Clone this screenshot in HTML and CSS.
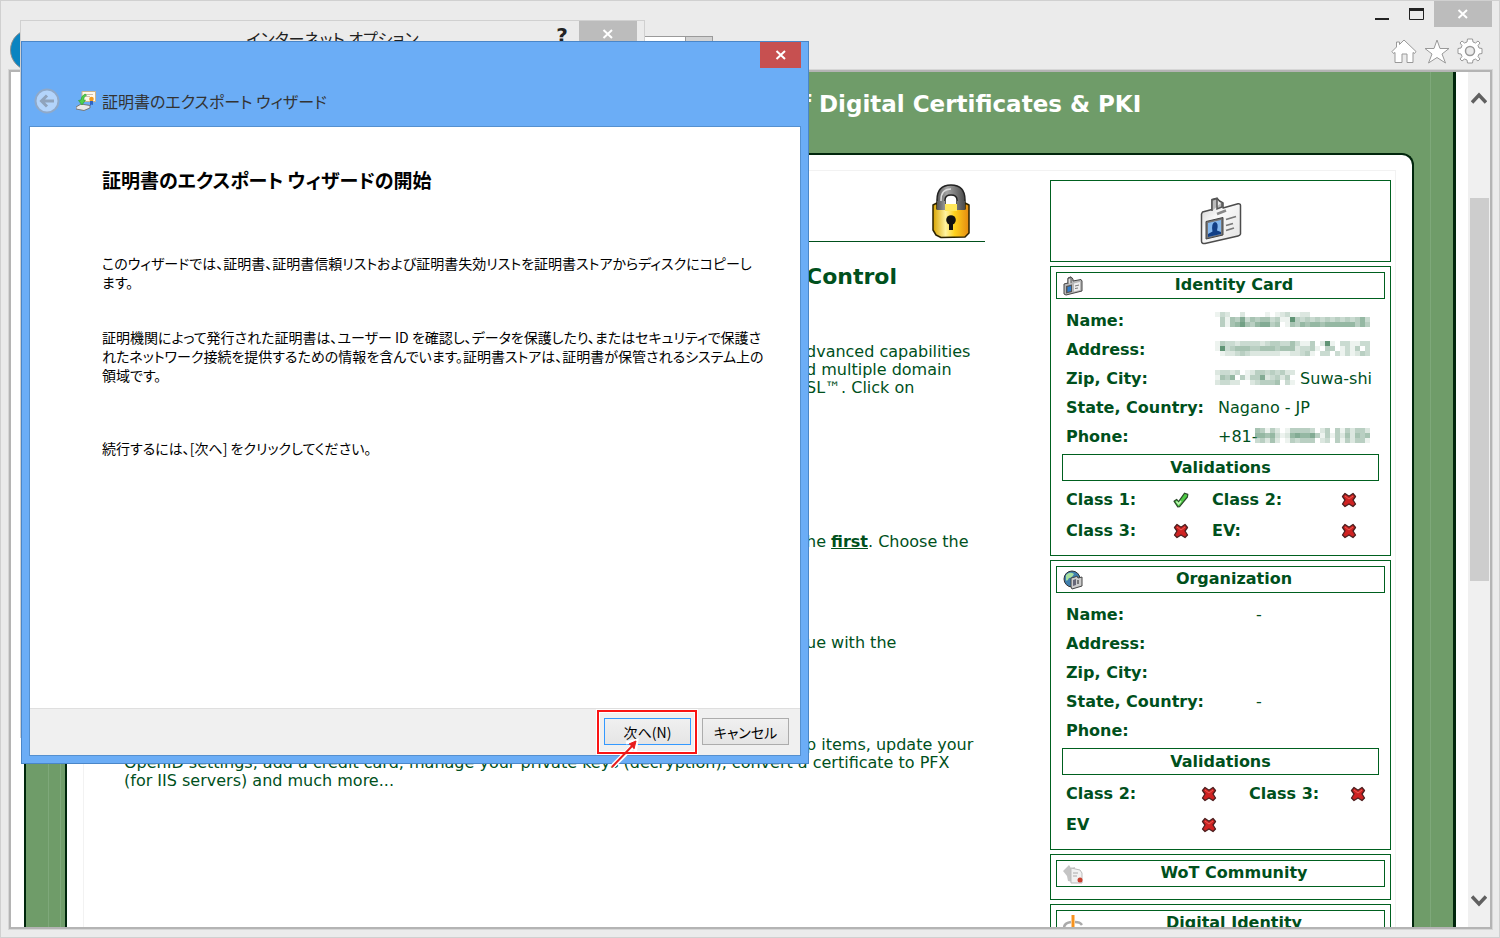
FILE: index.html
```
<!DOCTYPE html>
<html lang="ja">
<head>
	<title>証明書のエクスポート ウィザード</title>
	<meta charset="UTF-8">
	<link rel="stylesheet" href="styles.css">
</head>
<body>
<svg class="defs" width="0" height="0">
	<defs>
		<linearGradient id="gold" x1="0" x2="1" y1="0" y2="0">
			<stop offset="0" stop-color="#d9a400"/>
			<stop offset="0.35" stop-color="#fff3a0"/>
			<stop offset="0.6" stop-color="#ffd21c"/>
			<stop offset="1" stop-color="#e58a10"/>
		</linearGradient>
		<linearGradient id="steel" x1="0" x2="1" y1="0" y2="0">
			<stop offset="0" stop-color="#555"/>
			<stop offset="0.35" stop-color="#a5a5a5"/>
			<stop offset="1" stop-color="#4a4a4a"/>
		</linearGradient>
		<linearGradient id="card" x1="0" x2="1" y1="0" y2="1">
			<stop offset="0" stop-color="#c9c9c9"/>
			<stop offset="0.4" stop-color="#fafafa"/>
			<stop offset="1" stop-color="#e2e2e2"/>
		</linearGradient>
		<symbol id="cross" viewBox="0 0 16 16">
			<path d="M4 1.5 8 4.2 12 1.5 14.500 4.500 12 8 14.500 12 12 14.500 8 12 4 14.500 1.500 12 4 8 1.500 4.500z" fill="#cf2222" stroke="#4d2020" stroke-width="1.3" stroke-linejoin="round"/>
			<path d="M4 4 8 7 12 4" fill="none" stroke="#ea6055" stroke-width="1"/>
		</symbol>
		<symbol id="check" viewBox="0 0 16 16">
			<path d="M1 9.2 3.6 7.4 5.6 9.6 11.6 1.2 14.8 2.4 14.4 5 6.6 14.6 4.8 14.8z" fill="#4ecb45" stroke="#2b4a2b" stroke-width="1.2" stroke-linejoin="round"/>
			<path d="M3.4 9.4 5.6 12 8 9" fill="none" stroke="#c3f5b8" stroke-width="1.6"/>
		</symbol>
		<symbol id="badge" viewBox="0 0 42 48">
			<path d="M2.5 15 12 12.5 12 2.5 17 1.2 19.5 4 23 6 23 11 38 6.8Q40.500 6.400 40.500 8.500L40.500 37Q40 38.500 38 39L5 46.500Q1.500 47 1.500 44V17z" fill="url(#card)" stroke="#4c4c4c" stroke-width="1.500" stroke-linejoin="round"/>
			<path d="M12 14V3L17 1.500V12L22 10V5" fill="#bbb" stroke="#555" stroke-width="1.500"/>
			<path d="M17 17 26 13.500" stroke="#888" stroke-width="2.500"/>
			<path d="M6 24.500 23 20.500V38L6 42z" fill="#777" stroke="#444"/>
			<path d="M8 26 21 23V37L8 40z" fill="#86b9ee"/>
			<path d="M8 40V37L12.500 34.500Q11 26 15 25Q19 25.500 17 33.500L21 35V37z" fill="#123f86"/>
			<path d="M26 22.500 36 19.500M26 28.500 33 26.500M26 33.500 34 31" stroke="#777" stroke-width="1.800"/>
		</symbol>
		<symbol id="badge_small" viewBox="0 0 20 20">
			<path d="M1 8 5 7V2L8 .8 10 3V5L18 3.500 19 5V15L3 19 1 18z" fill="#b8b8b8" stroke="#444" stroke-linejoin="round"/>
			<path d="M5 8V2.500L8 1.500V7" fill="#ddd" stroke="#555"/>
			<path d="M3 10 9 8.500V16L3 17.500z" fill="#555"/>
			<path d="M4.500 11 8 10V15L4.500 16z" fill="#2f7fd0"/>
			<path d="M11 7.500 17 6V14L11 15.500z" fill="#eee"/>
			<path d="M12 10 16 9M12 12.500 15 12" stroke="#777"/>
		</symbol>
	</defs>
</svg>

<div class="browser">
	<div class="chrome">
		<div class="captions">
			<button class="cap" aria-label="最小化"><svg width="14" height="12"><path d="M0 11h14" stroke="#222" stroke-width="2"/></svg></button>
			<button class="cap" aria-label="最大化"><svg width="15" height="12"><path d="M.5 1V11.500H14.500V1" fill="none" stroke="#222"/><path d="M0 1.500h15" stroke="#222" stroke-width="3"/></svg></button>
			<button class="cap_close" aria-label="閉じる"><svg width="12" height="10"><path d="M1.500 1 10 9M10 1 1.500 9" stroke="#fff" stroke-width="2"/></svg></button>
		</div>
		<div class="toolbar">
			<button class="back" aria-label="戻る"></button>
			<input class="address" type="text" aria-label="アドレス">
			<button class="address_btn" aria-label="検索"></button>
			<div class="tools">
				<a href="#" aria-label="ホーム"><svg width="26" height="25"><path d="M13 1 25 12.500 23.500 14.500 22 13.500V23.500H16V15H11V23.500H4V13.500L2.500 14.500 1 12.500 5.500 8V3H8.500V5.500z" fill="#fff" stroke="#999"/></svg></a>
				<a href="#" aria-label="お気に入り"><svg width="26" height="25"><path d="M13 1 16 9.500H25L18 15 21.500 24 13 18.500 4.500 24 8 15 1 9.500H10z" fill="#fff" stroke="#999"/></svg></a>
				<a href="#" aria-label="ツール"><svg width="26" height="26" viewBox="-13 -13 26 26"><path d="M-2.500-12H2.500L3-9 5.500-8 8-10 10-8 8-5.500 9-3 12-2.500V2.500L9 3 8 5.500 10 8 8 10 5.500 8 3 9 2.500 12H-2.500L-3 9-5.500 8-8 10-10 8-8 5.500-9 3-12 2.500V-2.500L-9-3-8-5.500-10-8-8-10-5.500-8-3-9z" fill="#fff" stroke="#999"/><circle r="4.500" fill="#ebebeb" stroke="#999" stroke-width="1.500"/></svg></a>
			</div>
		</div>
	</div>

	<div class="viewport">
		<div class="site">
			<div class="site_head"><span>f Digital Certificates &amp; PKI</span></div>
			<div class="panel">
				<div class="inner">
					<div class="main">
						<div class="lock_row">
							<svg width="40" height="56" viewBox="0 0 40 56">
								<path d="M6 29V17Q6 2 20 2 34 2 34 17V29H26V17Q26 12 20 12 14 12 14 17V29z" fill="url(#steel)" stroke="#222" stroke-width="1.500"/>
								<path d="M10 26V17Q10 6 20 6" fill="none" stroke="#ddd" stroke-width="1.500"/>
								<path d="M2 22 6 20V26H34V20L38 22V50L34 54 10 54.500 5 52 2 47z" fill="url(#gold)" stroke="#2b2200" stroke-width="1.500" stroke-linejoin="round"/>
								<path d="M14 21H26V28H14z" fill="#ffe75a"/>
								<path d="M6 18H14V27H6zM26 18H34V27H26z" fill="url(#steel)"/>
								<circle cx="20" cy="37" r="4.800" fill="#111"/>
								<path d="M18 38H22V47H18z" fill="#111"/>
							</svg>
						</div>
						<h1 class="tail">Control</h1>
						<p class="tail caps">dvanced capabilities<br>d multiple domain<br>SL™. Click on</p>
						<p class="tail step">he <a href="#">first</a>. Choose the</p>
						<p class="tail cont">ue with the</p>
						<p class="last"><span class="tail">p items, update your</span>OpenID settings, add a credit card, manage your private keys (decryption), convert a certificate to PFX<br>(for IIS servers) and much more...</p>
					</div>
					<div class="side">
						<div class="box badge_box"><svg width="42" height="48"><use href="#badge"/></svg></div>
						<div class="box">
							<div class="title"><svg class="ico" width="20" height="20"><use href="#badge_small"/></svg>Identity Card</div>
							<table class="info">
								<tr><th>Name:</th><td><svg class="mosaic" data-rows="1320020000101231122000000000000,0415473545534119434343434343463,0415685467745015465665666666464"></svg></td></tr>
								<tr><th>Address:</th><td><svg class="mosaic" data-rows="1433233332344335311402910331133,1934555445554555233410440131403,0122343222222112234103303131243"></svg></td></tr>
								<tr><th>Zip, City:</th><td><svg class="mosaic" data-rows="2332301244343422,1546041447234240,2332200234445031"></svg> Suwa-shi</td></tr>
								<tr><th>State, Country:</th><td>Nagano - JP</td></tr>
								<tr><th>Phone:</th><td>+81-<svg class="mosaic" data-rows="54142014444302404142442,66563126766741414252545,34252014344402304142441"></svg></td></tr>
							</table>
							<div class="title valid">Validations</div>
							<div class="classes">
								<span>Class 1:</span><svg width="16" height="16"><use href="#check"/></svg>
								<span>Class 2:</span><svg width="16" height="16"><use href="#cross"/></svg>
								<span>Class 3:</span><svg width="16" height="16"><use href="#cross"/></svg>
								<span>EV:</span><svg width="16" height="16"><use href="#cross"/></svg>
							</div>
						</div>
						<div class="box">
							<div class="title"><svg class="ico" width="20" height="20"><circle cx="9" cy="9" r="8" fill="#3f7fae" stroke="#333"/><path d="M3 5Q7 1 11 4 9 8 6 8 4 12 3 10z" fill="#a8e0a0"/><path d="M8 8 12 7 14 6 15 8 19 7V16L9 19 8 17z" fill="#ccc" stroke="#444"/><path d="M10 10 13 9V15L10 16z" fill="#667"/><path d="M15 10V14" stroke="#777" stroke-width="2"/></svg>Organization</div>
							<table class="info org">
								<tr><th>Name:</th><td>-</td></tr>
								<tr><th>Address:</th><td></td></tr>
								<tr><th>Zip, City:</th><td></td></tr>
								<tr><th>State, Country:</th><td>-</td></tr>
								<tr><th>Phone:</th><td></td></tr>
							</table>
							<div class="title valid">Validations</div>
							<div class="classes wide">
								<span>Class 2:</span><svg width="16" height="16"><use href="#cross"/></svg>
								<span>Class 3:</span><svg width="16" height="16"><use href="#cross"/></svg>
								<span>EV</span><svg width="16" height="16"><use href="#cross"/></svg>
							</div>
						</div>
						<div class="box short">
							<div class="title"><svg class="ico" width="20" height="20"><path d="M0 7 6 1 8 4 12 3 10 18 5 17 4 12z" fill="#c4c4c4"/><path d="M8 4 17 6 19 9V19H8z" fill="#f1f1f1" stroke="#bbb"/><path d="M10 9H15M10 12H14" stroke="#aaa"/><circle cx="17" cy="16" r="2.500" fill="#c9402f"/></svg>WoT Community</div>
						</div>
						<div class="box short">
							<div class="title"><svg class="ico" width="20" height="20"><path d="M8 8Q1 9 1 14 1 18 9 19M12 8Q17 8 19 11" fill="none" stroke="#aaa" stroke-width="2.500"/><path d="M10 1V19" stroke="#f7931e" stroke-width="3"/></svg>Digital Identity</div>
						</div>
					</div>
				</div>
			</div>
		</div>
		<div class="scroll">
			<svg class="arrow" width="16" height="12"><path d="M1 10.500 8 3 15 10.500" fill="none" stroke="#606060" stroke-width="3.500"/></svg>
			<div class="thumb"></div>
			<svg class="arrow" width="16" height="12"><path d="M1 1.500 8 9 15 1.500" fill="none" stroke="#606060" stroke-width="3.500"/></svg>
		</div>
	</div>
</div>

<div class="options">
	<span class="options_title">インターネット オプション</span>
	<span class="options_help">?</span>
	<button class="options_close" aria-label="閉じる"><svg width="12" height="10"><path d="M1.500 1 10 9M10 1 1.500 9" stroke="#fff" stroke-width="2"/></svg></button>
</div>

<div class="wizard">
	<button class="wizard_close" aria-label="閉じる"><svg width="12" height="10"><path d="M1.500 1 10 9M10 1 1.500 9" stroke="#fff" stroke-width="2"/></svg></button>
	<div class="wizard_head">
		<button class="wizard_back" aria-label="戻る"><svg width="26" height="26"><circle cx="13" cy="13" r="11.500" fill="#b3d4fb" stroke="#8fa9c9" stroke-width="2"/><path d="M20 13H8M13 7.500 7.500 13 13 18.500" fill="none" stroke="#8fa3bc" stroke-width="3"/></svg></button>
		<svg width="20" height="20"><path d="M6 .5H19.500V10.500H6z" fill="#fdf8ea" stroke="#c9b48c"/><path d="M9 3.500H17M9 5.500H14" stroke="#c8bfae"/><circle cx="15.500" cy="8" r="2.300" fill="#f09a1c"/><path d="M14 10V15L15.500 13.500 17 14V10z" fill="#2d63c4"/><path d="M0 16 5 13 14 14.500V17L8 19.500 0 18z" fill="#e9e9e9" stroke="#777"/><path d="M9 3Q5 5 5 9L2.500 9.500 6 14 9.500 9 7.500 9Q7.500 6 10.500 4z" fill="#4fd04b" stroke="#2b9a2d" stroke-width=".6"/></svg>
		<span>証明書のエクスポート ウィザード</span>
	</div>
	<div class="wizard_body">
		<div class="wizard_text">
			<h2>証明書のエクスポート ウィザードの開始</h2>
			<p class="intro">このウィザードでは、証明書、証明書信頼リストおよび証明書失効リストを証明書ストアからディスクにコピーし<br>ます。</p>
			<p>証明機関によって発行された証明書は、ユーザー ID を確認し、データを保護したり、またはセキュリティで保護さ<br>れたネットワーク接続を提供するための情報を含んでいます。証明書ストアは、証明書が保管されるシステム上の<br>領域です。</p>
			<p class="next_text">続行するには、[次へ] をクリックしてください。</p>
		</div>
		<div class="wizard_foot">
			<div class="next_wrap">
				<button class="btn btn_next">次へ(N)</button>
				<svg class="mark" width="104" height="62">
					<rect x="3" y="3" width="98" height="42" fill="none" stroke="#fff" stroke-width="4"/>
					<path d="M17 59 39 37" stroke="#fff" stroke-width="5"/>
					<path d="M31 35 42 32 40 46" fill="none" stroke="#fff" stroke-width="3"/>
					<rect x="3" y="3" width="98" height="42" fill="none" stroke="#fa1414" stroke-width="2"/>
					<path d="M17 59 39 36" stroke="#e81c1c" stroke-width="2"/>
					<path d="M34 36 41 33 39 41" fill="#e81c1c" stroke="#e81c1c"/>
				</svg>
			</div>
			<button class="btn">キャンセル</button>
		</div>
	</div>
</div>

<script type="text/javascript">
	// each digit is the darkness of one 5px cell
	var list = document.getElementsByClassName('mosaic');
	for(var i=0;i<list.length;i++){
		var rows = list[i].getAttribute('data-rows').split(',');
		var str = '';
		for(var y=0;y<rows.length;y++){
			for(var x=0;x<rows[y].length;x++){
				str += '<rect x="'+x*5+'" y="'+y*5+'" width="5" height="5" fill="#4f8866" opacity="'+rows[y][x]/10+'"/>';
			}
		}
		list[i].setAttribute('width',rows[0].length*5);
		list[i].setAttribute('height',15);
		list[i].innerHTML = str;
	}
</script>
</body>
</html>
```
FILE: styles.css
```
*{
	margin: 0px;
	padding: 0px;
	box-sizing: border-box;
}
body{
	height: 100vh;
	overflow: hidden;
	position: relative;
	font-family: "DejaVu Sans", sans-serif;
	font-size: 16px;
}
button{
	border: none;
	background: none;
	font: inherit;
}
svg{
	display: block;
	flex: none;
}
.defs{
	position: absolute;
}

/* browser window */
.browser{
	height: 100vh;
	display: flex;
	flex-direction: column;
	background-color: #ebebeb;
	border: 1px solid #d0d0d0;
	padding: 0 7px 8px 8px;
}
.chrome{
	height: 69px;
	flex: none;
}
.captions{
	display: flex;
	justify-content: flex-end;
	height: 26px;
}
.cap{
	width: 34px;
	display: flex;
	justify-content: center;
	padding-top: 7px;
}
.cap_close{
	width: 58px;
	margin-left: 1px;
	display: flex;
	align-items: center;
	justify-content: center;
	background-color: #bcbcbc;
}
.toolbar{
	display: flex;
	align-items: center;
	height: 42px;
	margin-top: 2px;
}
.back{
	width: 42px;
	height: 42px;
	border-radius: 50%;
	border: 1px solid #8d8d8d;
	margin-left: 1px;
	background-color: #0a84c1;
}
.address{
	width: 634px;
	height: 28px;
	border: 1px solid #9a9a9a;
}
.address_btn{
	width: 27px;
	height: 28px;
	border: 1px solid #9a9a9a;
	border-left: none;
	background-color: #d2d2d2;
}
.tools{
	display: flex;
	align-items: center;
	gap: 7px;
	margin-left: auto;
	padding: 2px 9px 0 0;
}
.viewport{
	flex: 1;
	min-height: 0;
	display: flex;
	overflow: hidden;
	background-color: #fff;
	border: 2px solid #b4b4b4;
	outline: 1px solid #d6d6d6;
	padding-left: 13px;
}
.scroll{
	width: 22px;
	margin-left: 12px;
	display: flex;
	flex-direction: column;
	align-items: center;
	background-color: #f0f0f0;
	padding: 20px 0;
}
.arrow:last-child{
	margin-top: auto;
}
.thumb{
	width: 19px;
	height: 47%;
	margin-top: 94px;
	background-color: #cdcdcd;
}

/* web page */
.site{
	flex: 1;
	display: flex;
	flex-direction: column;
	color: #00501c;
	background-color: #6f9c69;
	background-image: linear-gradient(#7ea87a, #7ea87a), linear-gradient(#7ea87a, #7ea87a), linear-gradient(#7ea87a, #7ea87a);
	background-size: 1px 100%;
	background-position: 22px 0, 34px 0, calc(100% - 22px) 0;
	background-repeat: no-repeat;
	border-left: 2px solid #00260c;
	border-right: 3px solid #00260c;
}
.site_head{
	height: 81px;
	flex: none;
	padding: 18px 0 0 775px;
	color: #fff;
	font-size: 23px;
	line-height: 28px;
	font-weight: bold;
	white-space: nowrap;
}
.panel{
	flex: none;
	margin: 0 39px;
	background-color: #fff;
	border: 2px solid #00260c;
	border-bottom: none;
	border-radius: 12px 12px 0 0;
	padding: 15px 16px 0 16px;
}
.inner{
	display: flex;
	justify-content: space-between;
	border: 1px solid #f2f2f2;
	padding: 9px 4px 0 40px;
}
.main{
	flex: 1;
	margin-right: 65px;
	line-height: 18px;
	white-space: nowrap;
}
.tail{
	display: block;
	padding-left: 682px;
}
.lock_row{
	height: 62px;
	border-bottom: 1px solid #00501c;
	display: flex;
	justify-content: flex-end;
	padding: 3px 14px 0 0;
}
h1{
	margin-top: 21px;
	font-size: 22px;
	line-height: 28px;
}
.caps{
	margin-top: 52px;
}
.step{
	margin-top: 136px;
}
.step a{
	color: #00501c;
	font-weight: bold;
}
.cont{
	margin-top: 83px;
}
.last{
	margin-top: 84px;
}
.side{
	width: 341px;
	display: flex;
	flex-direction: column;
	gap: 4px;
}
.box{
	border: 1px solid #00601f;
	padding: 5px;
}
.badge_box{
	height: 82px;
	display: flex;
	align-items: center;
	justify-content: center;
}
.title{
	position: relative;
	height: 27px;
	border: 1px solid #00601f;
	text-align: center;
	font-weight: bold;
	line-height: 23px;
	padding-left: 27px;
}
.ico{
	position: absolute;
	left: 6px;
	top: 3px;
}
.valid{
	margin: 3px 6px 0 6px;
	padding-left: 0;
	line-height: 26px;
}
.info{
	border-spacing: 0;
	margin: 7px 0 0 10px;
}
.info th{
	width: 152px;
	height: 29px;
	text-align: left;
	white-space: nowrap;
}
.info td{
	white-space: nowrap;
}
.org td{
	padding-left: 38px;
}
.mosaic{
	display: inline-block;
	margin-left: -3px;
	vertical-align: -1px;
}
.classes{
	display: grid;
	grid-template-columns: 107px 39px 129px 1fr;
	grid-auto-rows: 31px;
	align-items: center;
	margin: 3px 0 4px 10px;
	font-weight: bold;
}
.wide{
	grid-template-columns: 135px 48px 101px 1fr;
}
.short{
	height: 46px;
}

/* windows over the browser */
.options{
	position: absolute;
	left: 20px;
	top: 20px;
	width: 625px;
	height: 718px;
	display: flex;
	align-items: flex-start;
	background-color: #ebebeb;
	border: 1px solid #d0d0d0;
	padding-right: 7px;
}
.options_title{
	flex: 1;
	padding-left: 99px;
	text-align: center;
	color: #222;
	font-family: "Noto Sans CJK JP", sans-serif;
	font-size: 16px;
	font-feature-settings: "palt";
	line-height: 34px;
}
.options_help{
	width: 34px;
	color: #222;
	font-size: 20px;
	font-weight: bold;
	line-height: 28px;
	text-align: center;
}
.options_close{
	width: 58px;
	height: 26px;
	display: flex;
	align-items: center;
	justify-content: center;
	background-color: #bcbcbc;
}
.wizard{
	position: absolute;
	left: 21px;
	top: 41px;
	width: 788px;
	display: flex;
	flex-direction: column;
	background-color: #6badf6;
	border: 1px solid #4a86c8;
	padding: 0 7px 7px 7px;
	color: #000;
	font-family: "Noto Sans CJK JP", sans-serif;
	font-feature-settings: "palt";
}
.wizard_close{
	align-self: flex-end;
	width: 41px;
	height: 26px;
	display: flex;
	align-items: center;
	justify-content: center;
	background-color: #c75050;
}
.wizard_head{
	height: 58px;
	display: flex;
	align-items: center;
	padding: 7px 0 0 5px;
	color: #333;
	font-size: 16px;
}
.wizard_back{
	margin-right: 16px;
}
.wizard_head span{
	margin-left: 6px;
}
.wizard_body{
	background-color: #fff;
	border: 1px solid #5590cf;
}
.wizard_text{
	min-height: 581px;
	padding: 39px 0 0 72px;
	font-size: 14px;
	line-height: 19px;
	white-space: nowrap;
}
.wizard_text h2{
	font-size: 19px;
	line-height: 28px;
}
.wizard_text p{
	margin-top: 36px;
}
.wizard_text .intro{
	margin-top: 60px;
}
.wizard_text .next_text{
	margin-top: 54px;
}
.wizard_foot{
	height: 47px;
	display: flex;
	justify-content: flex-end;
	gap: 11px;
	padding: 9px 11px 0 0;
	background-color: #f0f0f0;
	border-top: 1px solid #dfdfdf;
}
.next_wrap{
	position: relative;
}
.btn{
	width: 87px;
	height: 27px;
	border: 1px solid #acacac;
	background-image: linear-gradient(#f0f0f0, #e5e5e5);
	font-size: 14px;
	line-height: 24px;
}
.btn_next{
	border-color: #3399ff;
}
.mark{
	position: absolute;
	left: -9px;
	top: -10px;
}
```
